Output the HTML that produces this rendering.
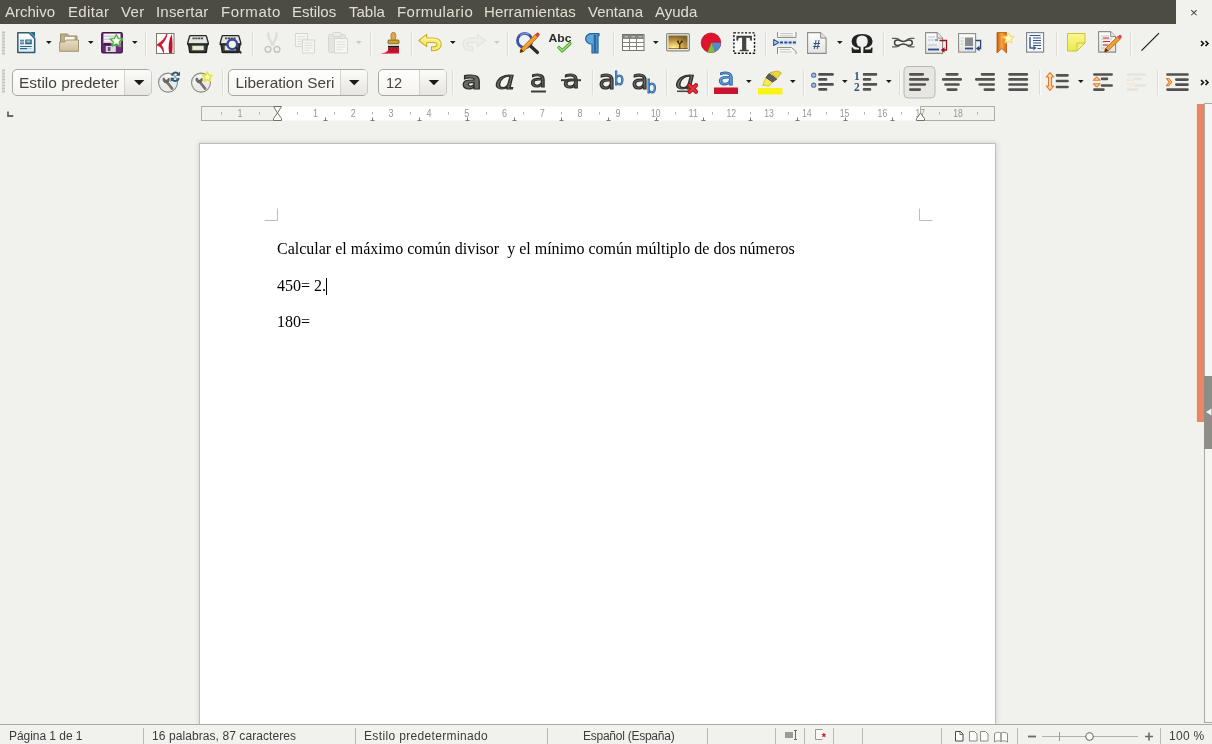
<!DOCTYPE html>
<html lang="es">
<head>
<meta charset="utf-8">
<title>Writer</title>
<style>
html,body{margin:0;padding:0;}
body{width:1212px;height:744px;overflow:hidden;background:#f1f1ed;position:relative;font-family:"Liberation Sans",sans-serif;color:#3c3c3c;}
#wrap{position:absolute;left:0;top:0;width:1212px;height:744px;will-change:transform;}
.abs{position:absolute;}
#menubar{position:absolute;left:0;top:0;width:1176px;height:24px;background:#4c4c43;}
#menubar span{position:absolute;top:3px;font-size:15px;line-height:18px;color:#e1ddd4;white-space:nowrap;}
#close{position:absolute;left:1190px;top:4px;font-size:13.5px;color:#3c3c3c;line-height:18px;}
#page{position:absolute;left:200px;top:144px;width:795px;height:580px;background:#fff;box-shadow:0 0 0 1px #bdbdb9,0 0 5px 2px rgba(0,0,0,.10);}
.doc{position:absolute;font-family:"Liberation Serif",serif;font-size:16px;line-height:18px;color:#000;white-space:pre;}
#status{position:absolute;left:0;top:724px;width:1212px;height:20px;background:#f1f1ed;border-top:1px solid #a9a8a2;}
#status span{position:absolute;top:4px;font-size:12px;line-height:15px;color:#3c3c3c;white-space:nowrap;}
.sep{position:absolute;width:1px;background:#b9b8b2;}
</style>
</head>
<body>
<div id="wrap">
<div id="menubar">
<span style="left:5px">Archivo</span>
<span style="left:68px;letter-spacing:.35px">Editar</span>
<span style="left:121px;letter-spacing:.4px">Ver</span>
<span style="left:156px;letter-spacing:.2px">Insertar</span>
<span style="left:221px;letter-spacing:.6px">Formato</span>
<span style="left:292px">Estilos</span>
<span style="left:349px">Tabla</span>
<span style="left:397px;letter-spacing:.45px">Formulario</span>
<span style="left:484px;letter-spacing:.15px">Herramientas</span>
<span style="left:588px">Ventana</span>
<span style="left:655px">Ayuda</span>
</div>
<div id="close">×</div>

<svg class="abs" style="left:0;top:0" width="1212" height="110" viewBox="0 0 1212 110" font-family="Liberation Sans, sans-serif">
<defs>
<linearGradient id="gDoc" x1="0" y1="0" x2="0" y2="1"><stop offset="0" stop-color="#ffffff"/><stop offset="1" stop-color="#dfe9ee"/></linearGradient>
<linearGradient id="gFold" x1="0" y1="0" x2="0" y2="1"><stop offset="0" stop-color="#e6dcc0"/><stop offset="1" stop-color="#cdbf9c"/></linearGradient>
<linearGradient id="gPaper" x1="0" y1="0" x2="0" y2="1"><stop offset="0" stop-color="#fdfdfd"/><stop offset="1" stop-color="#e4e4e2"/></linearGradient>
<linearGradient id="gBar" x1="0" y1="0" x2="0" y2="1"><stop offset="0" stop-color="#8a8a86"/><stop offset="1" stop-color="#3e3e3c"/></linearGradient>
<path id="dd" d="M0 0h5.6l-2.8 3.1z"/>
</defs>
<!-- grips -->
<g fill="#c3c2bc"><rect x="2" y="31.5" width="3" height="2"/><rect x="2" y="34.5" width="3" height="2"/><rect x="2" y="37.5" width="3" height="2"/><rect x="2" y="40.5" width="3" height="2"/><rect x="2" y="43.5" width="3" height="2"/><rect x="2" y="46.5" width="3" height="2"/><rect x="2" y="49.5" width="3" height="2"/><rect x="2" y="52.5" width="3" height="2"/><rect x="2" y="69.5" width="3" height="2"/><rect x="2" y="72.5" width="3" height="2"/><rect x="2" y="75.5" width="3" height="2"/><rect x="2" y="78.5" width="3" height="2"/><rect x="2" y="81.5" width="3" height="2"/><rect x="2" y="84.5" width="3" height="2"/><rect x="2" y="87.5" width="3" height="2"/><rect x="2" y="90.5" width="3" height="2"/></g>
<!-- separators toolbar1 -->
<g stroke-width="1">
<path stroke="#dcdbd6" d="M145.500 32v24M252.500 32v24M370.500 32v24M411.500 32v24M507.500 32v24M613.500 32v24M765.500 32v24M883.500 32v24M1056.500 32v24M1130.500 32v24"/>
<path stroke="#fafaf8" d="M146.500 32v24M253.500 32v24M371.500 32v24M412.500 32v24M508.500 32v24M614.500 32v24M766.500 32v24M884.500 32v24M1057.500 32v24M1131.500 32v24"/>
<path stroke="#dcdbd6" d="M222.500 70v25M452.500 70v25M592.500 70v25M666.500 70v25M707.500 70v25M803.500 70v25M899.500 70v25M1039.500 70v25M1157.500 70v25"/>
<path stroke="#fafaf8" d="M223.500 70v25M453.500 70v25M593.500 70v25M667.500 70v25M708.500 70v25M804.500 70v25M900.500 70v25M1040.500 70v25M1158.500 70v25"/>
</g>
<!-- dropdown arrows -->
<g fill="#1a1a1a">
<use href="#dd" x="46" y="41"/><use href="#dd" x="88" y="41"/><use href="#dd" x="132" y="41"/>
<use href="#dd" x="450" y="41"/><use href="#dd" x="653" y="41"/><use href="#dd" x="837" y="41"/>
<use href="#dd" x="746" y="80"/><use href="#dd" x="790" y="80"/><use href="#dd" x="842" y="80"/><use href="#dd" x="886" y="80"/><use href="#dd" x="1078" y="80"/>
</g>
<g fill="#c9c8c4"><use href="#dd" x="356" y="41"/><use href="#dd" x="494" y="41"/></g>

<!-- new doc -->
<g transform="translate(17,32)">
<path d="M0.800 .8h11.200l5.700 5.700v14h-16.900z" fill="url(#gDoc)" stroke="#2d5d74" stroke-width="1.500" stroke-linejoin="round"/>
<path d="M12.800 0h5.200v5.200z" fill="#2d6a88"/>
<rect x="8.200" y="7.500" width="6.600" height="4.800" fill="#2d6a88"/><rect x="9.500" y="8.500" width="4" height="2" fill="#9cc4d8"/>
<path d="M3 8.200h4M3 10h4M3 11.800h4M3 14.500h11.800M3 16.600h7" stroke="#2d6a88" stroke-width="1.100"/><path d="M10 16.600h4.800" stroke="#a8c8d8" stroke-width="1"/>
</g>
<!-- folder -->
<g transform="translate(59,33)">
<path d="M1.5 1h7l1.5 2h8v8h-16.5z" fill="#bfb08c" stroke="#9a8a68" stroke-width="1"/>
<rect x="5.5" y="3.5" width="10.5" height="6" fill="#fbfaf4" stroke="#a89a78" stroke-width=".8"/>
<path d="M.7 9h5l1.5-2h12.3v11.3h-18.8z" fill="url(#gFold)" stroke="#a39472" stroke-width="1" stroke-linejoin="round"/>
</g>
<!-- save -->
<g transform="translate(101,32)">
<rect x=".7" y=".7" width="20.600" height="20.200" rx="1.500" fill="#6b2a78" stroke="#3f1548" stroke-width="1.200"/>
<rect x="2.500" y="1.600" width="17" height="9.600" fill="#f8f6f8"/>
<path d="M2.500 4.200h11M2.500 7.200h9M2.500 10.200h8" stroke="#c4b4c8" stroke-width="1"/>
<rect x="2.500" y="11.200" width="7" height="2" fill="#3a1840"/>
<rect x="4.800" y="14" width="10" height="6" fill="#dcd8e0"/>
<rect x="6.800" y="15" width="2.600" height="4" fill="#5d5566"/>
<path d="M15.300 2.800l1.900 3.700 4.100.5-3 2.900.8 4.100-3.800-2.100-3.800 2.100.8-4.100-3-2.900 4.100-.5z" fill="#d4f4c4" stroke="#9adc8c" stroke-width="2.600" stroke-linejoin="round" opacity=".55"/>
<path d="M15.300 2.800l1.900 3.700 4.100.5-3 2.900.8 4.100-3.800-2.100-3.800 2.100.8-4.100-3-2.900 4.100-.5z" fill="#dcf8cc" stroke="#44a83c" stroke-width="1.100" stroke-linejoin="round"/>
<circle cx="15.300" cy="8.800" r="2.200" fill="#fbfff6"/>
</g>
<!-- pdf -->
<g transform="translate(156,33)">
<rect x=".5" y=".5" width="17.500" height="20" fill="#fdfdfd" stroke="#84746e" stroke-width="1"/>
<path d="M10.900 1c-1.500 4-5 7.500-9.900 11c4 1.500 5.500 4 6.600 7.600c-.1-3.500-.9-6-2.700-7.800c3-2.500 5.300-6 6-10.800z" fill="#d4142c" stroke="#d4142c" stroke-width=".9" stroke-linejoin="round"/>
<path d="M15.600 .9c-2.700 6-3.700 12.500-2.500 19h3c.8-6.500.6-12.500-.5-19z" fill="#c01028"/>
</g>
<!-- printer -->
<g transform="translate(187,35)">
<path d="M3.500 .7h15a1 1 0 0 1 1 .8l1.800 6.500v1.500h-20.600v-1.500l1.800-6.500a1 1 0 0 1 1-.8z" fill="#e6e6e2" stroke="#262624" stroke-width="1.300" stroke-linejoin="round"/>
<path d="M5.500 3.300h11" stroke="#4a4a48" stroke-width="1.700" stroke-dasharray="2.200 .6"/>
<path d="M1.500 9h19l-1.300 8.300h-16.400z" fill="#3e3e3c" stroke="#222220" stroke-width="1.500" stroke-linejoin="round"/>
<rect x="5.500" y="11" width="11" height="4" fill="#e6f0d8" stroke="#c8d0bc" stroke-width=".6"/>
<path d="M3 17.500h16" stroke="#1e1e1c" stroke-width="1.400"/>
</g>
<!-- print preview -->
<g transform="translate(219.500,35)">
<path d="M3.500 .7h15a1 1 0 0 1 1 .8l1.800 6.500v1.500h-20.600v-1.500l1.800-6.500a1 1 0 0 1 1-.8z" fill="#e6e6e2" stroke="#262624" stroke-width="1.300" stroke-linejoin="round"/>
<path d="M5.500 3.300h11" stroke="#4a4a48" stroke-width="1.700" stroke-dasharray="2.200 .6"/>
<path d="M1.500 9h19l-1.300 8.300h-16.400z" fill="#3e3e3c" stroke="#222220" stroke-width="1.500" stroke-linejoin="round"/>
<rect x="5.500" y="11" width="11" height="4" fill="#e6f0d8" stroke="#c8d0bc" stroke-width=".6"/>
<path d="M3 17.500h16" stroke="#1e1e1c" stroke-width="1.400"/>
<circle cx="12.800" cy="9.300" r="4.800" fill="#eef6e4" stroke="#3a48a8" stroke-width="2.300"/>
<path d="M16.800 13.300l4.200 4.200" stroke="#2a2a28" stroke-width="2.300" stroke-linecap="round"/>
</g>
<!-- cut (disabled) -->
<g transform="translate(264,32)" fill="none">
<path d="M4.500 .5c-.8 4 1.500 9 5.500 13M12.500 .5c.8 4-1.500 9-5.500 13" stroke="#dcdcd8" stroke-width="2.200"/>
<circle cx="4" cy="17.300" r="2.900" stroke="#c6c6c2" stroke-width="1.500"/><circle cx="13" cy="17.300" r="2.900" stroke="#c6c6c2" stroke-width="1.500"/>
</g>
<!-- copy (disabled) -->
<g transform="translate(295,33)" stroke="#d6d6d2" fill="#f5f5f2" stroke-width="1">
<rect x=".5" y=".5" width="12" height="13"/><path d="M2.500 3.500h8M2.500 6h8M2.500 8.500h8M2.500 11h5" stroke="#dededa"/>
<rect x="7.500" y="7" width="12" height="13"/><path d="M9.500 10h8M9.500 12.500h8M9.500 15h8M9.500 17.500h5" stroke="#dededa"/>
</g>
<!-- paste (disabled) -->
<g transform="translate(328,32)" stroke="#d6d6d2" fill="#e4e4e0" stroke-width="1">
<rect x=".5" y="2.500" width="17" height="18" rx="1"/><rect x="5" y=".5" width="8" height="4" rx="1" fill="#ecece8"/>
<rect x="6.500" y="6.500" width="13" height="14.500" fill="#f6f6f3"/><path d="M8.500 10h9M8.500 12.500h9M8.500 15h9M8.500 17.500h6" stroke="#dededa"/>
</g>
<!-- clone formatting (paintbrush) -->
<g transform="translate(379,32)">
<path d="M1 21.700c5-.8 7.500-2 8.500-4.500h10.500v4.300z" fill="#e01838"/>
<rect x="9" y="15.300" width="11" height="5" fill="#c41830"/>
<path d="M10.500 16l1.500 3.500M13.500 16l1.500 3.500M16.500 16l1.500 3.500" stroke="#8a1020" stroke-width=".9"/>
<rect x="9" y="13.600" width="11" height="1.900" fill="#1a1010"/>
<rect x="9.300" y="11.700" width="10.400" height="2" fill="#f2f2ee"/>
<rect x="9" y="8" width="11" height="3.800" rx=".8" fill="#c8a830" stroke="#6e5a10" stroke-width=".8"/>
<path d="M12.500 8c-.5-2.500-.8-4.500-.3-6a2.300 2.300 0 0 1 4.400 0c.5 1.500.2 3.500-.3 6z" fill="#dca84c" stroke="#a87424" stroke-width=".8"/>
</g>
<!-- undo -->
<g transform="translate(418,34)">
<path d="M.8 6.500L8.700 .4V4H15C20 4 23.200 6.500 23.200 10.300C23.200 14 20 16.700 15.500 16.700H13.500V12.700H15C17.500 12.700 19 11.900 19 10.400C19 9 17.500 8.500 15 8.500H8.700V12.600Z" fill="#f6ec78" stroke="#c8b020" stroke-width="1.100" stroke-linejoin="round"/>
<path d="M3 6.300L7.600 2.800V5.200H15C19 5.200 21.500 7 22 9.500" fill="none" stroke="#fdfbc8" stroke-width="1" opacity=".9"/>
</g>
<!-- redo (disabled) -->
<g transform="translate(463,34)">
<path d="M22.400 6.500L14.500 .4V4H8.200C3.200 4 0 6.500 0 10.300C0 14 3.200 16.700 7.700 16.700H9.700V12.700H8.200C5.700 12.700 4.200 11.900 4.200 10.400C4.200 9 5.700 8.500 8.200 8.500H14.500V12.600Z" fill="#ededea" stroke="#e2e2de" stroke-width="1.100" stroke-linejoin="round"/>
</g>
<!-- find & replace -->
<g transform="translate(516,31)">
<circle cx="8.700" cy="9.500" r="7.200" fill="#eef4fa" fill-opacity=".6" stroke="#3c50a4" stroke-width="2.800"/>
<path d="M4 5a6.500 6.500 0 0 1 9-1.500" fill="none" stroke="#8098d8" stroke-width="1.200"/>
<path d="M15 15.500l6.500 6" stroke="#2a2a2a" stroke-width="3.200" stroke-linecap="round"/>
<path d="M4 21.500l1-3.700 14-14.300 2.700 2.700-14 14.300z" fill="#f0a030" stroke="#b86a14" stroke-width=".9" stroke-linejoin="round"/>
<path d="M19 3.500l1.300-1.300a1.800 1.800 0 0 1 2.700 2.700l-1.300 1.300z" fill="#d84038"/>
<path d="M4 21.500l1-3.700 2.700 2.700z" fill="#3a3020"/>
</g>
<!-- spellcheck -->
<g transform="translate(549,33)">
<text x="-.5" y="8.600" font-size="11.500" font-weight="bold" fill="#2e2e2e" textLength="23" lengthAdjust="spacingAndGlyphs">Abc</text>
<path d="M10 14.500l3.200 3.300 7.800-7.300" fill="none" stroke="#4ea02c" stroke-width="3.200" stroke-linecap="round" stroke-linejoin="round"/>
<path d="M10 14.500l3.200 3.300 7.800-7.300" fill="none" stroke="#a4e478" stroke-width="1.300" stroke-linecap="round" stroke-linejoin="round"/>
</g>
<!-- formatting marks (pilcrow) -->
<g transform="translate(585,33)">
<path d="M6.500 .7h7.500v2h-1v17.300h-2.300v-17.300h-1.400v17.300h-2.300v-9c-3.500 0-6.300-2-6.300-5.200s2.800-5.100 5.800-5.100z" fill="#5fa8dc" stroke="#1d5f98" stroke-width="1.200" stroke-linejoin="round"/>
</g>
<!-- table -->
<g transform="translate(622,34)">
<rect x=".5" y=".5" width="21.500" height="16" fill="#fdfdfb" stroke="#74746f" stroke-width="1"/>
<rect x="1" y="1" width="20.500" height="3.500" fill="#85857f"/>
<path d="M2.500 2.700h3.500M9.500 2.700h3.500M16.500 2.700h3.500" stroke="#b4b4ae" stroke-width="1.400"/>
<path d="M.5 4.500h21.500M.5 8.500h21.500M.5 12.500h21.500M7.500 .5v16M14.500 .5v16" stroke="#85857f" stroke-width="1"/>
</g>
<!-- image -->
<g transform="translate(666,33)">
<defs><radialGradient id="gImg" cx=".28" cy=".95" r=".95"><stop offset="0" stop-color="#fff8c0"/><stop offset=".3" stop-color="#ecc860"/><stop offset=".65" stop-color="#b89040"/><stop offset="1" stop-color="#7a6428"/></radialGradient></defs>
<rect x=".6" y=".6" width="22.800" height="17.300" rx="1.200" fill="#eceae0" stroke="#8e8e86" stroke-width="1.200"/>
<rect x="2.500" y="2.500" width="19" height="13.500" fill="url(#gImg)"/>
<path d="M13.800 16v-5.500M13.800 11.500l-2.600-3.300M13.800 11l2.400-3.500M12.500 9.800l-.3-2.300M15 9.300l1.800-.5" stroke="#2e2408" stroke-width="1.100" fill="none"/>
<rect x="2.500" y="15" width="19" height="1" fill="#4a3810" opacity=".6"/>
</g>
<!-- chart -->
<g transform="translate(701,32)">
<circle cx="10" cy="10.800" r="9.800" fill="#dc142c" stroke="#b40c20" stroke-width=".7"/>
<path d="M10.500 10.800h9.300a9.800 9.800 0 0 1-5.800 8.900z" fill="#4c8cd0"/>
<path d="M10.500 10.800l3.500 8.900a9.800 9.800 0 0 1-7.500.3z" fill="#74c444"/>
</g>
<!-- text box -->
<g transform="translate(733,32)">
<rect x=".9" y=".9" width="20.600" height="20.400" fill="#fbfbf9" stroke="#111" stroke-width="1.400" stroke-dasharray="2.100 1.600"/>
<text x="11.200" y="18.800" font-family="Liberation Serif, serif" font-weight="bold" font-size="23" text-anchor="middle" fill="#444" stroke="#3a3a3a" stroke-width=".7">T</text>
</g>
<!-- page break -->
<g transform="translate(773,32)">
<path d="M4.500 0v5.500h18.500v-5.500" fill="#f6f6f4" stroke="#8c8c88" stroke-width="1"/>
<path d="M7 1.500h13M7 3.800h13" stroke="#c4c4c0" stroke-width="1"/>
<path d="M4.500 22v-6.500h14l4.500 4v2.500" fill="#f6f6f4" stroke="#8c8c88" stroke-width="1"/>
<path d="M7 17.500h10M7 20h12" stroke="#c4c4c0" stroke-width="1"/>
<rect x="0" y="7.500" width="23.500" height="6" fill="#dde7f3"/>
<path d="M.7 7.500l5 3-5 3z" fill="#b8d0ec" stroke="#34588c" stroke-width="1.100" stroke-linejoin="round"/>
<path d="M7 10.500h16" stroke="#2c4c84" stroke-width="2" stroke-dasharray="3 1.300"/>
</g>
<!-- field -->
<g transform="translate(807,32)">
<path d="M.6 .6h13l5.500 5.500v15.300h-18.500z" fill="url(#gPaper)" stroke="#8c8c88" stroke-width="1.100" stroke-linejoin="round"/>
<path d="M13.600 .6v5.500h5.500" fill="#e4e4e2" stroke="#8c8c88" stroke-width="1"/>
<text x="9.500" y="16.500" font-size="13" font-weight="bold" text-anchor="middle" fill="#34507c">#</text>
</g>
<!-- omega -->
<text x="862" y="52.500" font-family="Liberation Serif, serif" font-weight="bold" font-size="29.500" text-anchor="middle" fill="#222">Ω</text>
<!-- hyperlink -->
<g transform="translate(892,37)" fill="none">
<path d="M0 1.300h4c2 0 3 .8 4 1.800M0 9.900h4c2 0 3-.8 4-1.800M22.500 1.300h-4c-2 0-3 .8-4 1.800M22.500 9.900h-4c-2 0-3-.8-4-1.800" stroke="#5e5e5c" stroke-width="1.200"/>
<path d="M5.500 3C8 3 9 4.500 11.300 4.500C13.600 4.500 14.600 3 17 3C19 3 20.300 4.300 20.300 5.700C20.300 7.200 19 8.400 17 8.400C14.600 8.400 13.600 6.900 11.300 6.900C9 6.900 8 8.400 5.500 8.400C3.800 8.400 2.500 7.200 2.500 5.700C2.500 4.300 3.800 3 5.500 3Z" fill="#f6f6f4" stroke="#444442" stroke-width="1.500"/>
</g>
<!-- footnote -->
<g transform="translate(925,32)">
<path d="M.6 .6h11.500l5.500 5.500v15.300h-17z" fill="url(#gPaper)" stroke="#8c8c88" stroke-width="1.100" stroke-linejoin="round"/>
<path d="M12.100 .6v5.500h5.500" fill="#e4e4e2" stroke="#8c8c88" stroke-width="1"/>
<path d="M3 5h7M3 8h6M3 13h9" stroke="#b8c4d4" stroke-width="1"/><path d="M10 8h3" stroke="#3c5c9c" stroke-width="1.200"/>
<path d="M3 17.500h11" stroke="#2c4c94" stroke-width="1.800"/>
<path d="M14.500 8.500h7v9.500h-3" fill="none" stroke="#a01018" stroke-width="1.300"/>
<path d="M19.500 15.300l-3.700 2.700 3.700 2.700z" fill="#a01018"/>
</g>
<!-- endnote -->
<g transform="translate(958,33)">
<rect x=".6" y=".6" width="17" height="18.500" fill="url(#gPaper)" stroke="#8c8c88" stroke-width="1.100"/>
<rect x="7" y="4.500" width="8" height="8.500" fill="#8c8c8a"/>
<path d="M2.500 5h3M2.500 8h3M2.500 11h3" stroke="#c8c8c4" stroke-width="1"/>
<path d="M7 15.500h8" stroke="#2c4c94" stroke-width="1.800"/>
<path d="M17.600 7.500h5v8h-2" fill="none" stroke="#2c4c7c" stroke-width="1.300"/>
<path d="M21.500 12.800l-3.700 2.700 3.700 2.700z" fill="#2c4c7c"/>
</g>
<!-- bookmark -->
<g transform="translate(996,32)">
<defs><linearGradient id="gBm" x1="0" y1="0" x2="1" y2="0"><stop offset="0" stop-color="#c85c10"/><stop offset=".5" stop-color="#f8a83c"/><stop offset="1" stop-color="#d06814"/></linearGradient></defs>
<path d="M1 .5h9.500v20.500l-4.700-4.500-4.800 4.500z" fill="url(#gBm)" stroke="#b85410" stroke-width=".8" stroke-linejoin="round"/>
<path d="M12.500 1.500l1.500 3 3.300.4-2.400 2.300.6 3.300-3-1.600-3 1.600.6-3.300-2.400-2.300 3.300-.4z" fill="#fdf6a0" stroke="#f8e870" stroke-width="2.400" stroke-linejoin="round" opacity=".6"/>
<path d="M12.500 1.500l1.500 3 3.300.4-2.400 2.300.6 3.300-3-1.600-3 1.600.6-3.300-2.400-2.300 3.300-.4z" fill="#fffcd8" stroke="#f0d84c" stroke-width=".8" stroke-linejoin="round"/>
</g>
<!-- cross-reference -->
<g transform="translate(1026,32)">
<rect x=".6" y=".6" width="17" height="19.500" fill="#f8f8f6" stroke="#7c8088" stroke-width="1.100"/>
<path d="M3.500 3.500h11M7 6h8M7 8.500h8M7 11h8M7 13.500h8M11.500 16.500h3.500" stroke="#34588c" stroke-width="1.100"/>
<path d="M4 5v11h4" fill="none" stroke="#34588c" stroke-width="1.400"/>
<path d="M7.500 13.700l3 2.300-3 2.300z" fill="#34588c"/>
</g>
<!-- note -->
<g transform="translate(1067,33)">
<defs><linearGradient id="gNote" x1="0" y1="0" x2="0" y2="1"><stop offset="0" stop-color="#fbf88c"/><stop offset="1" stop-color="#ece850"/></linearGradient></defs>
<path d="M.5 .5h17.500v9.500l-8 8h-9.500z" fill="url(#gNote)" stroke="#c8c43c" stroke-width="1" stroke-linejoin="round"/>
<path d="M18 10h-8v8z" fill="#f4f080" stroke="#c8c43c" stroke-width=".9" stroke-linejoin="round"/>
</g>
<!-- track changes -->
<g transform="translate(1098,31)">
<path d="M.6 .6h12l5 5v15.500h-17z" fill="url(#gPaper)" stroke="#8c8c88" stroke-width="1.100" stroke-linejoin="round"/>
<path d="M12.600 .6v5h5" fill="#e4e4e2" stroke="#8c8c88" stroke-width="1"/>
<path d="M3 5h8M3 8h11M3 11h5M3 14h8M3 17h4" stroke="#c8c8c8" stroke-width="1"/>
<path d="M5 7h6M5 10.500h7M5 14h5" stroke="#d82c3c" stroke-width="1.200"/>
<path d="M6.500 21l1.200-3.800 11.800-11.500 2.600 2.600-11.800 11.500z" fill="#f0a030" stroke="#b86a14" stroke-width=".9" stroke-linejoin="round"/>
<path d="M19.500 5.700l1.200-1.200a1.800 1.800 0 0 1 2.600 2.600l-1.200 1.200z" fill="#d84860"/>
<path d="M6.500 21l1.200-3.800 2.600 2.600z" fill="#3a3020"/>
</g>
<!-- line -->
<path d="M1141.500 50.700l17.500-17.500" stroke="#1e1e1e" stroke-width="1.150"/>
<!-- chevrons -->
<g fill="none" stroke="#111" stroke-width="1.600">
<path d="M1201 41l2.500 2.500-2.500 2.500M1205.500 41l2.500 2.500-2.500 2.500"/>
<path d="M1201 80l2.500 2.500-2.500 2.500M1205.500 80l2.500 2.500-2.500 2.500"/>
</g>
<!-- comboboxes -->
<defs>
<linearGradient id="gCb" x1="0" y1="0" x2="0" y2="1"><stop offset="0" stop-color="#ffffff"/><stop offset="1" stop-color="#f4f3f0"/></linearGradient>
<linearGradient id="gCbBtn" x1="0" y1="0" x2="0" y2="1"><stop offset="0" stop-color="#fbfbfa"/><stop offset="1" stop-color="#e6e5e1"/></linearGradient>
<linearGradient id="gA" x1="0" y1="0" x2="0" y2="1"><stop offset="0" stop-color="#8e8e8a"/><stop offset="1" stop-color="#3a3a38"/></linearGradient>
<path id="cbArrow" d="M0 0h10.400l-5.200 5.200z"/>
</defs>
<g>
<rect x="12.500" y="69.500" width="139" height="26" rx="4.500" fill="url(#gCb)" stroke="#a8a7a1"/>
<path d="M124.500 70h23a4 4 0 0 1 4 4v17a4 4 0 0 1-4 4h-23z" fill="url(#gCbBtn)"/>
<path d="M124.500 70v25" stroke="#d4d3ce"/>
<use href="#cbArrow" x="134" y="80" fill="#1a1a1a"/>
<text x="19" y="87.600" font-size="14.500" fill="#444" textLength="100" lengthAdjust="spacingAndGlyphs">Estilo predeter</text>

<rect x="228.500" y="69.500" width="139" height="26" rx="4.500" fill="url(#gCb)" stroke="#a8a7a1"/>
<path d="M340.500 70h23a4 4 0 0 1 4 4v17a4 4 0 0 1-4 4h-23z" fill="url(#gCbBtn)"/>
<path d="M340.500 70v25" stroke="#d4d3ce"/>
<use href="#cbArrow" x="349" y="80" fill="#1a1a1a"/>
<text x="235.500" y="87.600" font-size="14.500" fill="#444" textLength="99" lengthAdjust="spacingAndGlyphs">Liberation Seri</text>

<rect x="378.500" y="69.500" width="68" height="26" rx="4.500" fill="url(#gCb)" stroke="#a8a7a1"/>
<path d="M419.500 70h23a4 4 0 0 1 4 4v17a4 4 0 0 1-4 4h-23z" fill="url(#gCbBtn)"/>
<path d="M419.500 70v25" stroke="#d4d3ce"/>
<use href="#cbArrow" x="428.700" y="80" fill="#1a1a1a"/>
<text x="386" y="87.600" font-size="14.500" fill="#444">12</text>
</g>
<!-- style icons -->
<g transform="translate(158,71)">
<circle cx="10" cy="11.600" r="9.500" fill="#ebebe8" stroke="#8a8a86" stroke-width="1.100"/>
<path d="M4.500 13a6 6 0 0 1 9-7" fill="none" stroke="#fbfbfa" stroke-width="2.400" opacity=".8"/>
<path d="M8.500 10.500l5.500 7" stroke="#72726f" stroke-width="2.800" stroke-linecap="round"/>
<path d="M5 7.200a3.400 3.400 0 0 0 5.200 4a3.400 3.400 0 0 0 .8-4.200l-2.200 2.200-2-.5-.4-1.800z" fill="#6a6a68" stroke="#5a5a58" stroke-width=".6"/>
<path d="M13.800 4.600a3.700 3.700 0 0 1 6.500-1.600M20.800 7a3.700 3.700 0 0 1-6.500 1.600" fill="none" stroke="#2c5c84" stroke-width="2"/>
<path d="M22 .5v4.300h-4.300zM12.600 11.100v-4.300h4.300z" fill="#2c5c84"/>
</g>
<g transform="translate(191,71)">
<circle cx="10" cy="11.600" r="9.500" fill="#ebebe8" stroke="#8a8a86" stroke-width="1.100"/>
<path d="M4.500 13a6 6 0 0 1 9-7" fill="none" stroke="#fbfbfa" stroke-width="2.400" opacity=".8"/>
<path d="M8.500 10.500l5.500 7" stroke="#72726f" stroke-width="2.800" stroke-linecap="round"/>
<path d="M5 7.200a3.400 3.400 0 0 0 5.200 4a3.400 3.400 0 0 0 .8-4.200l-2.200 2.200-2-.5-.4-1.800z" fill="#6a6a68" stroke="#5a5a58" stroke-width=".6"/>
<g transform="translate(16.300,5.900) scale(.88) translate(-16.300,-5.200)"><path d="M16.300 -.3l1.700 3.500 3.800.5-2.800 2.600.7 3.800-3.400-1.900-3.400 1.900.7-3.800-2.800-2.600 3.800-.5z" fill="#fdfdc8" stroke="#e6e640" stroke-width="1.800" stroke-linejoin="round"/></g>
</g>
<!-- bold / italic / underline / strike -->
<g font-family="DejaVu Sans, Liberation Sans, sans-serif" fill="#6a6a68" stroke="#2e2e2e" stroke-width="1.200" text-anchor="middle">
<text x="471.800" y="88.500" font-size="25" font-weight="bold" textLength="19.500" lengthAdjust="spacingAndGlyphs">a</text>
<text x="505.300" y="88.500" font-size="26.500" font-family="DejaVu Serif, Liberation Serif, serif" font-style="italic" stroke-width="1.100" textLength="20" lengthAdjust="spacingAndGlyphs">a</text>
<text x="538.300" y="86.800" font-size="23.500" textLength="16.500" lengthAdjust="spacingAndGlyphs">a</text>
<text x="571.300" y="88.200" font-size="25.500" textLength="17" lengthAdjust="spacingAndGlyphs">a</text>
<text x="607" y="88.500" font-size="26" textLength="17" lengthAdjust="spacingAndGlyphs">a</text>
<text x="640" y="88.500" font-size="26" textLength="17" lengthAdjust="spacingAndGlyphs">a</text>
</g>
<path d="M531 91.500h15" stroke="#3e3e3c" stroke-width="2"/>
<path d="M561 80.200h20" stroke="#3e3e3c" stroke-width="2"/>
<g font-family="DejaVu Sans, Liberation Sans, sans-serif" fill="#6ca4dc" stroke="#2c68a8" stroke-width=".9" text-anchor="middle">
<text x="619" y="84.500" font-size="17.500" textLength="10" lengthAdjust="spacingAndGlyphs">b</text>
<text x="651.600" y="93" font-size="17.500" textLength="10" lengthAdjust="spacingAndGlyphs">b</text>
</g>
<!-- clear formatting -->
<g>
<text x="685.500" y="88.800" font-family="DejaVu Serif, Liberation Serif, serif" font-style="italic" font-size="26.500" text-anchor="middle" fill="#6e6e6c" stroke="#2e2e2e" stroke-width="1.100" textLength="20" lengthAdjust="spacingAndGlyphs">a</text>
<path d="M677 91.300h12" stroke="#4a4a48" stroke-width="1.600"/>
<path d="M689.500 85.300l6.500 6.500M696 85.300l-6.500 6.500" stroke="#a80c14" stroke-width="4.200" stroke-linecap="round"/>
<path d="M689.500 85.300l6.500 6.500M696 85.300l-6.500 6.500" stroke="#e83038" stroke-width="2.400" stroke-linecap="round"/>
</g>
<!-- font colour -->
<text x="726.300" y="85.400" font-family="DejaVu Sans, Liberation Sans, sans-serif" font-size="23.500" text-anchor="middle" fill="#6ca4dc" stroke="#2c68a8" stroke-width=".9" textLength="17" lengthAdjust="spacingAndGlyphs">a</text>
<rect x="714" y="87.500" width="24" height="6.500" fill="#c8142c"/>
<!-- highlight -->
<g transform="translate(758,71)">
<path d="M5 13.500l3-7 6.500 4.500-4 4.500z" fill="#f4ec50" stroke="#c8bc28" stroke-width=".8" stroke-linejoin="round"/>
<path d="M8 6.500l3-4 8 5.500-4.500 3z" fill="#5e5e5a" stroke="#3e3e3c" stroke-width=".8" stroke-linejoin="round"/>
<path d="M12 1.500l8-1.500 3.500 2-4.500 5.500z" fill="#e8d83c" stroke="#c0b020" stroke-width=".8" stroke-linejoin="round"/>
<path d="M3.500 15l1.500-1.500 3 1.500z" fill="#e0d030"/>
<rect x="0" y="17" width="24.500" height="6.500" fill="#f8f418"/>
</g>
<!-- bullets -->
<g transform="translate(811,72.600)">
<circle cx="2.700" cy="2.600" r="2.100" fill="#a4bce0" stroke="#5878a8" stroke-width="1.100"/>
<circle cx="2.700" cy="12.600" r="2.100" fill="#a4bce0" stroke="#5878a8" stroke-width="1.100"/>
<g stroke="url(#gBar)" stroke-width="2.800" stroke-linecap="round">
<path d="M8.500 1.800h13M8.500 6.800h6.500M8.500 11.800h13M8.500 16.800h6.500" stroke="#4e4e4c"/>
</g>
</g>
<!-- numbering -->
<g transform="translate(854,72.600)">
<text x="0" y="7.500" font-family="Liberation Serif, serif" font-weight="bold" font-size="11.500" fill="#3c5878">1</text>
<text x="0" y="18.500" font-family="Liberation Serif, serif" font-weight="bold" font-size="11.500" fill="#3c5878">2</text>
<g stroke-width="2.600" stroke-linecap="round" stroke="#525250">
<path d="M10 1.800h12M10 6.800h6M10 11.800h12M10 16.800h6"/>
</g>
</g>
<!-- active align-left bg -->
<rect x="904" y="66.500" width="31" height="31.500" rx="4" fill="#e7e6e2" stroke="#b9b8b2"/>
<g stroke-width="2.700" stroke-linecap="round" stroke="#525250">
<path d="M910.300 74.300h12.500M910.300 79.400h17.500M910.300 84.500h14.500M910.300 89.600h9.500"/>
<path d="M946.800 74.300h10.500M943.200 79.400h17.500M945.500 84.500h13M947.800 89.600h8.500"/>
<path d="M982 74.300h11.700M976.300 79.400h17.400M979.700 84.500h14M984.800 89.600h8.900"/>
<path d="M1009.500 74.300h17.400M1009.500 79.400h17.400M1009.500 84.500h17.400M1009.500 89.600h17.400"/>
<!-- line spacing -->
<path d="M1057 75.300h10.500M1057 81h10.500M1057 87h10.500"/>
<!-- para spacing inc -->
<path d="M1094.400 74.500h17.200M1102 78.800h5M1102 85.500h9.600M1094.400 89.600h9"/>
<!-- indent -->
<path d="M1167.500 74.500h20M1176.300 79.600h11.200M1176.300 84.600h11.200M1167.500 89.600h20"/>
</g>
<!-- para spacing dec (disabled) -->
<g stroke-width="2.600" stroke-linecap="round" stroke="#e4e4e0">
<path d="M1128 74.500h17M1135.500 78.800h5M1135.500 85.500h9.600M1128 89.600h9"/>
</g>
<!-- line spacing arrow -->
<path d="M1050 72.600l3.700 4.400h-2.200v9h2.200l-3.700 4.400-3.700-4.400h2.200v-9h-2.200z" fill="#fbd8b0" stroke="#e07c24" stroke-width="1.100" stroke-linejoin="round"/>
<!-- para spacing triangles -->
<path d="M1093.300 80.300l2.900-3h1l2.900 3zM1093.300 83.700l2.900 3h1l2.900-3z" fill="#fbd8b0" stroke="#e07c24" stroke-width="1.100" stroke-linejoin="round"/>
<path d="M1127 80.300l2.900-3h1l2.900 3zM1127 83.700l2.900 3h1l2.900-3z" fill="#f4f0ea" stroke="#ece4d8" stroke-width="1" stroke-linejoin="round"/>
<!-- indent chevron -->
<path d="M1166.500 78.500h2.300l3 3.600-3 3.600h-2.300l2.800-3.600z" fill="#fbd8b0" stroke="#e07c24" stroke-width="1.100" stroke-linejoin="round"/>

</svg>

<!--TOOLBAR2-->
<svg class="abs" style="left:0;top:100px" width="1212" height="30" viewBox="0 100 1212 30" font-family="Liberation Sans, sans-serif">
<rect x="277" y="106.5" width="643.5" height="14" fill="#ffffff"/>
<rect x="201.500" y="106.500" width="76" height="14" fill="none" stroke="#adada9"/>
<rect x="920.500" y="106.500" width="74" height="14" fill="none" stroke="#adada9"/>
<path d="M8 111.500v4.500h5.300" fill="none" stroke="#6a6a68" stroke-width="1.800"/>
<text x="239.9" y="117" font-size="10.500" text-anchor="middle" fill="#969694" textLength="5.0" lengthAdjust="spacingAndGlyphs">1</text>
<path d="M221.5 112v2.500" stroke="#b0b0ac"/>
<path d="M259.5 112v2.500" stroke="#b0b0ac"/>
<path d="M297.5 112v2.500" stroke="#b0b0ac"/>
<text x="315.5" y="117" font-size="10.500" text-anchor="middle" fill="#969694" textLength="5.0" lengthAdjust="spacingAndGlyphs">1</text>
<path d="M334.5 112v2.500" stroke="#b0b0ac"/>
<text x="353.3" y="117" font-size="10.500" text-anchor="middle" fill="#969694" textLength="5.0" lengthAdjust="spacingAndGlyphs">2</text>
<path d="M372.5 112v2.500" stroke="#b0b0ac"/>
<text x="391.1" y="117" font-size="10.500" text-anchor="middle" fill="#969694" textLength="5.0" lengthAdjust="spacingAndGlyphs">3</text>
<path d="M410.5 112v2.500" stroke="#b0b0ac"/>
<text x="428.9" y="117" font-size="10.500" text-anchor="middle" fill="#969694" textLength="5.0" lengthAdjust="spacingAndGlyphs">4</text>
<path d="M448.5 112v2.500" stroke="#b0b0ac"/>
<text x="466.7" y="117" font-size="10.500" text-anchor="middle" fill="#969694" textLength="5.0" lengthAdjust="spacingAndGlyphs">5</text>
<path d="M486.5 112v2.500" stroke="#b0b0ac"/>
<text x="504.5" y="117" font-size="10.500" text-anchor="middle" fill="#969694" textLength="5.0" lengthAdjust="spacingAndGlyphs">6</text>
<path d="M523.5 112v2.500" stroke="#b0b0ac"/>
<text x="542.3" y="117" font-size="10.500" text-anchor="middle" fill="#969694" textLength="5.0" lengthAdjust="spacingAndGlyphs">7</text>
<path d="M561.5 112v2.500" stroke="#b0b0ac"/>
<text x="580.1" y="117" font-size="10.500" text-anchor="middle" fill="#969694" textLength="5.0" lengthAdjust="spacingAndGlyphs">8</text>
<path d="M599.5 112v2.500" stroke="#b0b0ac"/>
<text x="617.9" y="117" font-size="10.500" text-anchor="middle" fill="#969694" textLength="5.0" lengthAdjust="spacingAndGlyphs">9</text>
<path d="M637.5 112v2.500" stroke="#b0b0ac"/>
<text x="655.7" y="117" font-size="10.500" text-anchor="middle" fill="#969694" textLength="9.6" lengthAdjust="spacingAndGlyphs">10</text>
<path d="M675.5 112v2.500" stroke="#b0b0ac"/>
<text x="693.4" y="117" font-size="10.500" text-anchor="middle" fill="#969694" textLength="9.6" lengthAdjust="spacingAndGlyphs">11</text>
<path d="M712.5 112v2.500" stroke="#b0b0ac"/>
<text x="731.2" y="117" font-size="10.500" text-anchor="middle" fill="#969694" textLength="9.6" lengthAdjust="spacingAndGlyphs">12</text>
<path d="M750.5 112v2.500" stroke="#b0b0ac"/>
<text x="769.0" y="117" font-size="10.500" text-anchor="middle" fill="#969694" textLength="9.6" lengthAdjust="spacingAndGlyphs">13</text>
<path d="M788.5 112v2.500" stroke="#b0b0ac"/>
<text x="806.8" y="117" font-size="10.500" text-anchor="middle" fill="#969694" textLength="9.6" lengthAdjust="spacingAndGlyphs">14</text>
<path d="M826.5 112v2.500" stroke="#b0b0ac"/>
<text x="844.6" y="117" font-size="10.500" text-anchor="middle" fill="#969694" textLength="9.6" lengthAdjust="spacingAndGlyphs">15</text>
<path d="M864.5 112v2.500" stroke="#b0b0ac"/>
<text x="882.4" y="117" font-size="10.500" text-anchor="middle" fill="#969694" textLength="9.6" lengthAdjust="spacingAndGlyphs">16</text>
<path d="M901.5 112v2.500" stroke="#b0b0ac"/>
<text x="920.2" y="117" font-size="10.500" text-anchor="middle" fill="#969694" textLength="9.6" lengthAdjust="spacingAndGlyphs">17</text>
<path d="M939.5 112v2.500" stroke="#b0b0ac"/>
<text x="958.0" y="117" font-size="10.500" text-anchor="middle" fill="#969694" textLength="9.6" lengthAdjust="spacingAndGlyphs">18</text>
<path d="M977.5 112v2.500" stroke="#b0b0ac"/>
<path d="M325.5 117.500v3M323.5 120.500h4M372.5 117.500v3M370.5 120.500h4M419.5 117.500v3M417.5 120.500h4M467.5 117.500v3M465.5 120.500h4M514.5 117.500v3M512.5 120.500h4M561.5 117.500v3M559.5 120.500h4M608.5 117.500v3M606.5 120.500h4M656.5 117.500v3M654.5 120.500h4M703.5 117.500v3M701.5 120.500h4M750.5 117.500v3M748.5 120.500h4M797.5 117.500v3M795.5 120.500h4M845.5 117.500v3M843.5 120.500h4M892.5 117.500v3M890.5 120.500h4" stroke="#7c7c78" fill="none"/>
<path d="M273.500 106.500h8l-4 6.500zM273.500 120.500h8v-2l-4-5.500-4 5.500z" fill="#fff" stroke="#70706c" stroke-linejoin="round"/>
<path d="M916.500 120.500h8v-2l-4-5.500-4 5.500z" fill="#fff" stroke="#70706c" stroke-linejoin="round"/>
</svg>

<div id="page"></div>
<div class="doc" style="left:277px;top:240px">Calcular el máximo común divisor  y el mínimo común múltiplo de dos números</div>
<div class="doc" style="left:277px;top:277px">450= 2.</div>
<div class="doc" style="left:277px;top:313px">180=</div>
<div class="abs" style="left:326px;top:278px;width:1px;height:17px;background:#000"></div>

<div class="abs" style="left:1196px;top:104px;width:1px;height:318px;background:#fbe3d4"></div>
<div class="abs" style="left:1205px;top:104px;width:7px;height:618px;background:#f5f5f2"></div>
<div class="abs" style="left:1197px;top:104px;width:7px;height:318px;background:linear-gradient(to right,#d88a74,#f2845f 50%,#d88a74)"></div>
<div class="abs" style="left:1204px;top:104px;width:1px;height:619px;background:#a9a8a2"></div>
<div class="abs" style="left:1204px;top:103px;width:8px;height:1px;background:#a9a8a2"></div>
<div class="abs" style="left:1204px;top:376px;width:8px;height:73px;background:#8f8e86"></div>
<svg class="abs" style="left:1204px;top:406px" width="8" height="12" viewBox="0 0 8 12"><path d="M7.500 2.500v7l-5.500-3.500z" fill="#f4f3ef"/></svg>
<div class="abs" style="left:1204px;top:722px;width:8px;height:1px;background:#a9a8a2"></div>
<!-- page crop marks -->
<svg class="abs" style="left:260px;top:204px" width="680" height="20" viewBox="260 204 680 20"><path d="M264.500 220.500h13v-12M932.500 220.500h-13v-12" fill="none" stroke="#bdbdbd"/></svg>


<div id="status"><div class="sep" style="left:143px;top:3px;height:16px"></div><div class="sep" style="left:355px;top:3px;height:16px"></div><div class="sep" style="left:547px;top:3px;height:16px"></div><div class="sep" style="left:707px;top:3px;height:16px"></div><div class="sep" style="left:775px;top:3px;height:16px"></div><div class="sep" style="left:804px;top:3px;height:16px"></div><div class="sep" style="left:833px;top:3px;height:16px"></div><div class="sep" style="left:862px;top:3px;height:16px"></div><div class="sep" style="left:941px;top:3px;height:16px"></div><div class="sep" style="left:1017px;top:3px;height:16px"></div><div class="sep" style="left:1160px;top:3px;height:16px"></div><svg class="abs" style="left:0;top:0" width="1212" height="20" viewBox="0 724 1212 20">
<!-- selection mode -->
<rect x="785" y="731" width="8" height="6" fill="#9a9a96"/><path d="M795.500 729.500v9M794 729.500h3M794 738.500h3" stroke="#6a6a68" fill="none"/>
<!-- modified -->
<path d="M822.500 728.500h-7v10h7" fill="#fafaf8" stroke="#9a9a96"/><text x="824" y="740" font-family="Liberation Sans, sans-serif" font-size="11" font-weight="bold" text-anchor="middle" fill="#c01030">*</text>
<!-- view layout -->
<path d="M955.500 730.500h5l2.500 2.500v7h-7.500z" fill="#fff" stroke="#4a4a48"/><path d="M960 730.500v3h3" fill="none" stroke="#4a4a48" stroke-width=".8"/>
<g stroke="#8c8c88" fill="#fbfbf9"><path d="M969.500 730.500h5l2.500 2.500v7h-7.500zM980.500 730.500h5l2.500 2.500v7h-7.500z"/><path d="M994.500 732.500c2-1.500 4.500-1.500 6.500-.5v8.500c-2-1-4.500-1-6.500.5zM1007.500 732.500c-2-1.500-4.500-1.500-6.500-.5v8.500c2-1 4.500-1 6.500.5z"/></g>
<!-- zoom slider -->
<path d="M1028 735.500h8" stroke="#6a6a68" stroke-width="1.800"/>
<path d="M1042 735.500h96" stroke="#b0b0ac" stroke-width="1"/>
<path d="M1059.500 731v9" stroke="#9a9a96"/>
<circle cx="1089.500" cy="735.500" r="3.700" fill="#fbfbf9" stroke="#6a6a68" stroke-width="1.100"/>
<path d="M1145 735.500h8M1149 731.500v8" stroke="#6a6a68" stroke-width="1.600"/>
</svg>
<span style="left:9px;letter-spacing:-.05px">Página 1 de 1</span>
<span style="left:152px;letter-spacing:.08px">16 palabras, 87 caracteres</span>
<span style="left:364px;letter-spacing:.35px">Estilo predeterminado</span>
<span style="left:583px;letter-spacing:-.25px">Español (España)</span>
<span style="left:1169px;letter-spacing:.3px">100 %</span>
</div>
</div>
</body>
</html>
